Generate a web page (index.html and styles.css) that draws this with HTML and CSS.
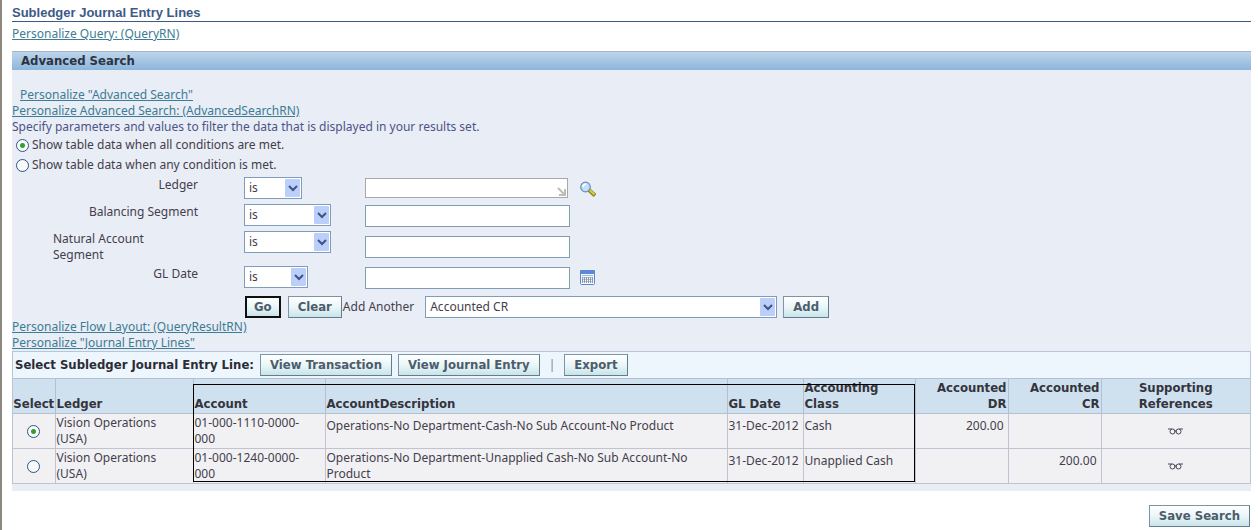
FILE: index.html
```html
<!DOCTYPE html>
<html lang="en">
<head>
    <meta charset="UTF-8">
    <meta name="viewport" content="width=device-width, initial-scale=1.0">
    <title>Subledger Journal Entry Lines</title>
    <link rel="stylesheet" href="styles.css">
</head>
<body>
    <h1>Subledger Journal Entry Lines</h1>
    <a class="personalize" href="#">Personalize Query: (QueryRN)</a>

    <main class="panel">
        <h2>Advanced Search</h2>

        <!-- Search form -->
        <form>
            <div class="intro">
                <a class="personalize indent" href="#">Personalize "Advanced Search"</a>
                <a class="personalize" href="#">Personalize Advanced Search: (AdvancedSearchRN)</a>
                <p>Specify parameters and values to filter the data that is displayed in your results set.</p>
            </div>
            <div class="match">
                <label><input type="radio" name="match" checked> Show table data when all conditions are met.</label>
                <label><input type="radio" name="match"> Show table data when any condition is met.</label>
            </div>

            <div class="criteria">
                <label for="ledger">Ledger</label>
                <select class="short" aria-label="Ledger condition"><option>is</option></select>
                <div class="lov">
                    <input type="text" id="ledger">
                    <svg class="corner" width="9" height="9" viewBox="0 0 9 9"><path d="M1 1l6 6M8 2v6H2" fill="none" stroke="#bdbdb8" stroke-width="2"/></svg>
                </div>
                <button type="button" class="icon" aria-label="Search for Ledger">
                    <svg width="16" height="16" viewBox="0 0 16 16">
                        <path d="M9 9l6 5.500" stroke="#8c8420" stroke-width="4"/>
                        <path d="M9.500 9l5 4.500" stroke="#d8cc48" stroke-width="2"/>
                        <circle cx="5.500" cy="6" r="4.800" fill="#c3e0fa" stroke="#6c8cb8" stroke-width="1.200"/>
                        <path d="M3 6a3 3 0 0 1 3-2.800" fill="none" stroke="#fff" stroke-width="1.500"/>
                    </svg>
                </button>

                <label for="balancing">Balancing Segment</label>
                <select class="long" aria-label="Balancing Segment condition"><option>is</option></select>
                <input type="text" id="balancing">
                <span></span>

                <label for="natural" class="wrapped">Natural Account<br>Segment</label>
                <select class="long" aria-label="Natural Account Segment condition"><option>is</option></select>
                <input type="text" id="natural" class="middle">
                <span></span>

                <label for="gldate">GL Date</label>
                <select class="medium" aria-label="GL Date condition"><option>is</option></select>
                <input type="text" id="gldate">
                <button type="button" class="icon" aria-label="Pick GL Date">
                    <svg width="16" height="16" viewBox="0 0 16 16">
                        <rect x="0.500" y="0.500" width="14" height="14" rx="1" fill="#f4f8ff" stroke="#5f88cc"/>
                        <rect x="0" y="0" width="15" height="4" rx="1" fill="#5c88d4"/>
                        <path d="M2 5.500h11" stroke="#9cb8e8"/>
                        <rect x="2" y="7" width="11" height="6" fill="#8c98ac"/>
                        <path d="M3 8.500h9M3 10.500h9M3 12.500h9" stroke="#fff" stroke-dasharray="1 1"/>
                        <path d="M3 7.500h9M3 9.500h9M3 11.500h9" stroke="#b8c0cc" stroke-dasharray="1 1"/>
                    </svg>
                </button>
            </div>

            <div class="actions">
                <button type="submit" class="button go">Go</button>
                <button type="reset" class="button">Clear</button>
                <label for="another">Add Another</label>
                <select id="another"><option>Accounted CR</option></select>
                <button type="button" class="button">Add</button>
            </div>
        </form>

        <a class="personalize" href="#">Personalize Flow Layout: (QueryResultRN)</a>
        <a class="personalize" href="#">Personalize "Journal Entry Lines"</a>

        <!-- Results -->
        <div class="results">
            <div class="toolbar">
                <strong>Select Subledger Journal Entry Line:</strong>
                <button type="button" class="button">View Transaction</button>
                <button type="button" class="button">View Journal Entry</button>
                <span class="divider">|</span>
                <button type="button" class="button">Export</button>
            </div>
            <div class="lines">
                <table>
                    <colgroup>
                        <col class="col-select">
                        <col class="col-ledger">
                        <col class="col-account">
                        <col>
                        <col class="col-date">
                        <col class="col-class">
                        <col class="col-amount">
                        <col class="col-amount">
                        <col class="col-refs">
                    </colgroup>
                    <thead>
                        <tr>
                            <th class="center">Select</th>
                            <th>Ledger</th>
                            <th>Account</th>
                            <th>AccountDescription</th>
                            <th>GL Date</th>
                            <th>Accounting<br>Class</th>
                            <th class="right">Accounted<br>DR</th>
                            <th class="right">Accounted<br>CR</th>
                            <th class="center">Supporting<br>References</th>
                        </tr>
                    </thead>
                    <tbody>
                        <tr>
                            <td class="center"><input type="radio" name="line" aria-label="Select line 1" checked></td>
                            <td>Vision Operations<br>(USA)</td>
                            <td>01-000-1110-0000-<br>000</td>
                            <td class="single">Operations-No Department-Cash-No Sub Account-No Product</td>
                            <td class="single">31-Dec-2012</td>
                            <td class="single">Cash</td>
                            <td class="single amount">200.00</td>
                            <td></td>
                            <td class="center">
                                <a href="#" aria-label="Supporting references"><svg width="15" height="7" viewBox="0 0 15 7"><path d="M0 1h4M11 1h4M6 3h3" stroke="#444a58"/><circle cx="4.500" cy="3.500" r="2.500" fill="none" stroke="#444a58"/><circle cx="10.500" cy="3.500" r="2.500" fill="none" stroke="#444a58"/></svg></a>
                            </td>
                        </tr>
                        <tr>
                            <td class="center"><input type="radio" name="line" aria-label="Select line 2"></td>
                            <td>Vision Operations<br>(USA)</td>
                            <td>01-000-1240-0000-<br>000</td>
                            <td>Operations-No Department-Unapplied Cash-No Sub Account-No<br>Product</td>
                            <td class="single">31-Dec-2012</td>
                            <td class="single">Unapplied Cash</td>
                            <td></td>
                            <td class="single amount">200.00</td>
                            <td class="center">
                                <a href="#" aria-label="Supporting references"><svg width="15" height="7" viewBox="0 0 15 7"><path d="M0 1h4M11 1h4M6 3h3" stroke="#444a58"/><circle cx="4.500" cy="3.500" r="2.500" fill="none" stroke="#444a58"/><circle cx="10.500" cy="3.500" r="2.500" fill="none" stroke="#444a58"/></svg></a>
                            </td>
                        </tr>
                    </tbody>
                </table>
                <div class="highlight"></div>
            </div>
        </div>
    </main>

    <div class="footer">
        <button type="button" class="button">Save Search</button>
    </div>
</body>
</html>
```
FILE: styles.css
```css
* {
    box-sizing: border-box;
}
body {
    margin: 0;
    padding: 5px 7px 3px 10px;
    min-height: 100vh;
    border-left: 2px solid #8c8880;
    background-color: #fff;
    color: #443e4c;
    font-family: "Noto Sans", sans-serif;
    font-size: 12px;
    line-height: 16px;
}
h1 {
    margin: 0 0 4px;
    border-bottom: 1px solid #3c5a88;
    color: #3c5a88;
    font-family: "Liberation Sans", Arial, sans-serif;
    font-size: 13px;
    line-height: 16px;
}
h2, th, .button, .toolbar strong {
    font-family: "DejaVu Sans Condensed", "DejaVu Sans", sans-serif;
    font-stretch: condensed;
    font-size: 13px;
    font-weight: bold;
}
h2 {
    margin: 0 0 17px;
    padding: 0 9px 1px;
    border-top: 1px solid #a5b5c5;
    background: linear-gradient(#bed5ea, #8db5dc);
    color: #2c3444;
    line-height: 17px;
}
p {
    margin: 0;
    color: #4c5488;
}
input, select {
    font: inherit;
    color: inherit;
}
.personalize {
    display: table;
    color: #3c7c94;
}
.indent {
    margin-left: 8px;
}
.panel {
    margin-top: 9px;
    padding-bottom: 7px;
    background-color: #e9edf5;
}

/* Radio buttons */
.match label {
    display: flex;
    align-items: center;
    gap: 3px;
    padding-left: 4px;
    height: 20px;
}
input[type="radio"] {
    appearance: none;
    flex: none;
    width: 13px;
    height: 13px;
    margin: 0;
    border: 1px solid #2c5484;
    border-radius: 50%;
    background-color: #fafafa;
}
input[type="radio"]:checked {
    background-image: radial-gradient(circle, #2ca42c 2px, transparent 3px);
}

/* Search criteria */
.criteria {
    display: grid;
    grid-template-columns: 232px 121px 205px 1fr;
    grid-auto-rows: minmax(24px, auto);
    row-gap: 3px;
    align-items: start;
    margin-top: 2px;
}
.criteria label {
    padding: 0 46px 0 41px;
    text-align: right;
}
.criteria .wrapped {
    text-align: left;
}
input[type="text"] {
    display: block;
    width: 100%;
    height: 22px;
    margin-top: 1px;
    padding: 0 4px;
    border: 1px solid #7f9db9;
    background-color: #fff;
}
.criteria .middle {
    align-self: center;
    margin-top: 0;
}
.lov {
    position: relative;
    margin-right: 2px;
}
.lov input {
    height: 20px;
    border-color: #a8a8ac;
}
.corner {
    position: absolute;
    right: 2px;
    bottom: 2px;
}
.icon {
    display: flex;
    margin: 4px 0 0 10px;
    padding: 0;
    border: none;
    background: none;
}
select {
    appearance: none;
    height: 22px;
    padding: 0 24px 0 4px;
    border: 1px solid #7f9db9;
    border-radius: 0;
    background: #fff url("data:image/svg+xml,%3Csvg xmlns='http://www.w3.org/2000/svg' width='15' height='18'%3E%3Crect width='15' height='18' rx='1' fill='%23bccffa'/%3E%3Cpath d='M4 7l4 4 4-4' fill='none' stroke='%233c5484' stroke-width='2'/%3E%3C/svg%3E") no-repeat right 1px center;
}
.short {
    width: 58px;
}
.medium {
    width: 64px;
}
.long {
    width: 87px;
}

/* Buttons */
.button {
    height: 22px;
    padding: 0 9px;
    border: 1px solid #7c94a4;
    border-right-color: #647c8c;
    border-bottom-color: #647c8c;
    background: linear-gradient(#fff, #eaf6f8 50%, #c8e4ea);
    color: #4c5c6c;
    line-height: 18px;
}
.go {
    margin-right: 7px;
    padding: 0 7px;
    border: 2px solid #101010;
}
.actions {
    display: flex;
    align-items: center;
    padding: 6px 0 1px 233px;
}
.actions label {
    margin: 0 11px 0 1px;
}
.actions select {
    width: 352px;
    margin-right: 6px;
}

/* Results table */
.results {
    border: 1px solid #b8c4d8;
    border-bottom: none;
}
.toolbar {
    display: flex;
    align-items: center;
    gap: 6px;
    height: 26px;
    padding-left: 2px;
    background-color: #edf5fd;
}
.toolbar strong {
    color: #2c2c34;
}
.divider {
    margin: 0 3px;
    color: #7c8494;
}
.lines {
    position: relative;
}
table {
    width: 100%;
    table-layout: fixed;
    border-collapse: collapse;
    background-color: #f1f1f4;
}
.col-select {
    width: 42px;
}
.col-ledger {
    width: 138px;
}
.col-account {
    width: 132px;
}
.col-date {
    width: 76px;
}
.col-class {
    width: 112px;
}
.col-amount {
    width: 93px;
}
.col-refs {
    width: 149px;
}
th, td {
    height: 35px;
    padding: 1px 0 1px 1px;
    border: 1px solid #c0c4d0;
    text-align: left;
    vertical-align: top;
}
th {
    border-color: #b4c0d0;
    background-color: #cfe0ef;
    color: #34343c;
    vertical-align: bottom;
}
tr > :first-child {
    border-left: none;
}
tr > :last-child {
    border-right: none;
}
td.single {
    padding-top: 4px;
}
.center {
    padding-left: 0;
    text-align: center;
}
td.center {
    vertical-align: middle;
}
.center input {
    display: block;
    margin: 0 auto;
}
.right {
    padding-right: 1px;
    text-align: right;
}
td.amount {
    padding-right: 4px;
    text-align: right;
}
/* Frame around Account to Accounting Class */
.highlight {
    position: absolute;
    top: 6px;
    right: 335px;
    bottom: 2px;
    left: 180px;
    border: 1px solid #000;
    pointer-events: none;
}

.footer {
    display: flex;
    justify-content: flex-end;
    padding: 14px 1px 0 0;
}
```
